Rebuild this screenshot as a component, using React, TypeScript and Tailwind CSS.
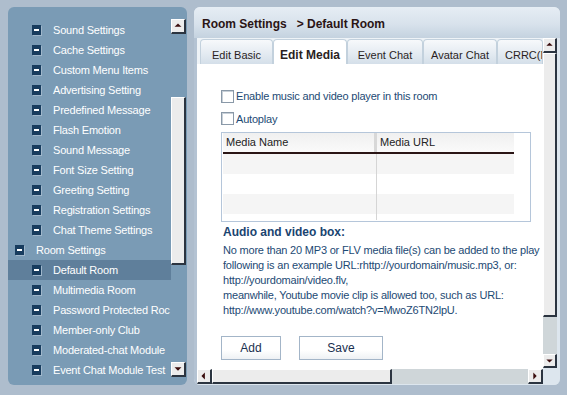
import React from 'react';

const FONT = { fontFamily: '"Liberation Sans", Arial, sans-serif' };

type TreeItem = { label: string; level: 0 | 1; selected?: boolean };

const TREE: TreeItem[] = [
  { label: 'Sound Settings', level: 1 },
  { label: 'Cache Settings', level: 1 },
  { label: 'Custom Menu Items', level: 1 },
  { label: 'Advertising Setting', level: 1 },
  { label: 'Predefined Message', level: 1 },
  { label: 'Flash Emotion', level: 1 },
  { label: 'Sound Message', level: 1 },
  { label: 'Font Size Setting', level: 1 },
  { label: 'Greeting Setting', level: 1 },
  { label: 'Registration Settings', level: 1 },
  { label: 'Chat Theme Settings', level: 1 },
  { label: 'Room Settings', level: 0 },
  { label: 'Default Room', level: 1, selected: true },
  { label: 'Multimedia Room', level: 1 },
  { label: 'Password Protected Roc', level: 1 },
  { label: 'Member-only Club', level: 1 },
  { label: 'Moderated-chat Module', level: 1 },
  { label: 'Event Chat Module Test', level: 1 },
];

const TABS = ['Edit Basic', 'Edit Media', 'Event Chat', 'Avatar Chat', 'CRRC(M'];
const TAB_WIDTHS = [73, 74, 76, 74, 46];

// small collapse box used in the tree
function MinusBox() {
  return (
    <svg width="10" height="11" viewBox="0 0 10 11" className="shrink-0">
      <rect x="1" y="1" width="9" height="10" fill="#9fb6ca" />
      <rect x="0" y="0" width="9" height="10" fill="#173c5e" />
      <rect x="2" y="4" width="5" height="2" fill="#ffffff" />
    </svg>
  );
}

function ArrowButton({ dir, className = '' }: { dir: 'up' | 'down' | 'left' | 'right'; className?: string }) {
  const pts = {
    up: '3,8 7,4 11,8',
    down: '3,5 7,9 11,5',
    left: '8,3 4,7 8,11',
    right: '5,3 9,7 5,11',
  }[dir];
  return (
    <div
      className={`flex items-center justify-center bg-[#ececec] border-t border-l border-t-white border-l-white border-r-2 border-b-2 border-r-[#2b3440] border-b-[#2b3440] ${className}`}
    >
      <svg width="14" height="14" viewBox="0 0 14 14">
        <polygon points={pts} fill="#3a0d0d" />
      </svg>
    </div>
  );
}

function Tree() {
  return (
    <div className="flex-1 overflow-hidden pt-[13px]">
      {TREE.map((item) => (
        <div
          key={item.label}
          className={`flex h-[20px] items-center whitespace-nowrap text-[11px] tracking-[-0.2px] text-white ${
            item.selected ? 'bg-[#5f7f9b]' : ''
          } ${item.level === 0 ? 'pl-[7px]' : 'pl-[24px]'}`}
        >
          <MinusBox />
          <span className="ml-[11px]">{item.label}</span>
        </div>
      ))}
    </div>
  );
}

function LeftPanel() {
  return (
    <div className="flex h-[378px] w-[179px] rounded-[6px] bg-[#7a9bb5]">
      <Tree />
      <div className="mr-[1px] flex w-[15px] flex-col pt-[12px]">
        <ArrowButton dir="up" className="h-[15px] w-[15px]" />
        <div className="h-[63px]" />
        <div className="h-[168px] bg-[#ececec] border-t border-l border-white border-r-2 border-b-2 border-r-[#2b3440] border-b-[#2b3440]" />
        <div className="flex-1" />
        <ArrowButton dir="down" className="h-[15px] w-[15px]" />
        <div className="h-[8px]" />
      </div>
    </div>
  );
}

function Checkbox({ label }: { label: string }) {
  return (
    <label className="flex items-center gap-[2px] text-[11px] tracking-[-0.2px] text-[#1d4a74]">
      <span className="block h-[13px] w-[13px] border border-[#8a99a8] bg-white shadow-[inset_1px_1px_0_#c8d0d8]" />
      {label}
    </label>
  );
}

function MediaTable() {
  return (
    <div className="mt-[5px] h-[90px] w-[310px] border border-[#b5c6da] bg-white pl-[1px]">
      <div className="flex h-[21px] w-[291px] items-center border-b-2 border-[#2a1515] bg-[linear-gradient(#f0f0f0,#fafafa)] text-[11px] text-[#222]">
        <div className="flex h-full w-[154px] items-center border-r-[3px] border-[#d8d8d8] pl-[3px]">Media Name</div>
        <div className="pl-[3px]">Media URL</div>
      </div>
      {[0, 1, 2].map((i) => (
        <div key={i} className={`flex h-[20px] w-[291px] ${i % 2 === 0 ? 'bg-[#f5f5f5]' : 'bg-white'}`}>
          <div className="w-[154px] border-r border-[#d5d5d5]" />
        </div>
      ))}
      <div className="flex h-[6px] w-[291px]">
        <div className="w-[154px] border-r border-[#d5d5d5]" />
      </div>
    </div>
  );
}

function Button({ label, width }: { label: string; width: string }) {
  return (
    <button
      className={`h-[24px] ${width} border border-[#a3b5c8] bg-[linear-gradient(#ffffff_60%,#eef1f4)] text-[12px] text-[#1a3050]`}
    >
      {label}
    </button>
  );
}

function MediaContent() {
  return (
    <div className="flex-1 overflow-hidden bg-white pl-[24px] pt-[24px] text-[#1d4a74]">
      <Checkbox label="Enable music and video player in this room" />
      <div className="mt-[6px]">
        <Checkbox label="Autoplay" />
      </div>
      <MediaTable />
      <div className="mt-[2px] pl-[2px] text-[12px] font-bold leading-[16px] text-[#1a4470]">Audio and video box:</div>
      <div className="mt-[3px] whitespace-nowrap pl-[2px] text-[11px] leading-[15px] tracking-[-0.2px]">
        <div>No more than 20 MP3 or FLV media file(s) can be added to the play</div>
        <div>following is an example URL:rhttp://yourdomain/music.mp3, or:</div>
        <div>http://yourdomain/video.flv,</div>
        <div>meanwhile, Youtube movie clip is allowed too, such as URL:</div>
        <div>http://www.youtube.com/watch?v=MwoZ6TN2lpU.</div>
      </div>
      <div className="mt-[18px] flex gap-[18px]">
        <Button label="Add" width="w-[60px]" />
        <Button label="Save" width="w-[84px]" />
      </div>
    </div>
  );
}

function RightPanel() {
  return (
    <div className="flex h-[378px] w-[366px] flex-col overflow-hidden rounded-[6px] bg-[#dde6ee]">
      <div className="flex h-[31px] shrink-0 items-center bg-[linear-gradient(#e6edf4,#d8e2ec_55%,#c4d2df)] pl-[8px] pt-[3px] text-[12px] font-bold text-[#2a1414]">
        Room Settings&nbsp;&nbsp;&nbsp;&gt; Default Room
      </div>
      <div className="flex flex-1 bg-[#b4c3d3] pl-[3px]">
        <div className="flex w-[346px] flex-col">
          <div className="flex h-[26px] shrink-0 items-end bg-[#eef3f7] pl-[3px]">
            {TABS.map((t, i) => (
              <div
                key={t}
                style={{ width: TAB_WIDTHS[i] }}
                className={`flex h-[25px] shrink-0 items-center overflow-hidden whitespace-nowrap rounded-t-[4px] border border-b-0 border-[#c3d1dd] pt-[6px] text-[11px] text-[#2a1e1e] ${
                  i === 1 ? 'bg-white text-[12px] font-bold' : 'bg-[linear-gradient(#f7f9fb,#e3eaf1_60%,#d4dfe9)]'
                } ${i === 4 ? 'justify-start pl-[7px]' : 'justify-center'}`}
              >
                {t}
              </div>
            ))}
          </div>
          <MediaContent />
          <div className="flex h-[15px] shrink-0 bg-[#cfd6d9]">
            <ArrowButton dir="left" className="h-[15px] w-[15px]" />
            <div className="w-[180px] bg-[#ececec] border-t border-l border-white border-r-2 border-b-2 border-r-[#2b3440] border-b-[#2b3440]" />
            <div className="flex-1" />
            <ArrowButton dir="right" className="h-[15px] w-[15px]" />
          </div>
        </div>
        <div className="flex w-[14px] flex-col bg-[#cfd6d9]">
          <ArrowButton dir="up" className="h-[15px] w-[14px]" />
          <div className="h-[264px] bg-[#ececec] border-t border-l border-white border-r-2 border-b-2 border-r-[#2b3440] border-b-[#2b3440]" />
          <div className="flex-1" />
          <ArrowButton dir="down" className="h-[14px] w-[14px]" />
          <div className="h-[16px] bg-[#dde6ee]" />
        </div>
        <div className="w-[3px] bg-[#dde6ee]" />
      </div>
      <div className="h-[1px] bg-[#dde6ee]" />
    </div>
  );
}

export default function App() {
  return (
    <div
      style={FONT}
      className="flex h-[395px] w-[567px] gap-[7px] overflow-hidden bg-[#aebdcd] pl-[8px] pt-[7px]"
    >
      <LeftPanel />
      <RightPanel />
    </div>
  );
}
